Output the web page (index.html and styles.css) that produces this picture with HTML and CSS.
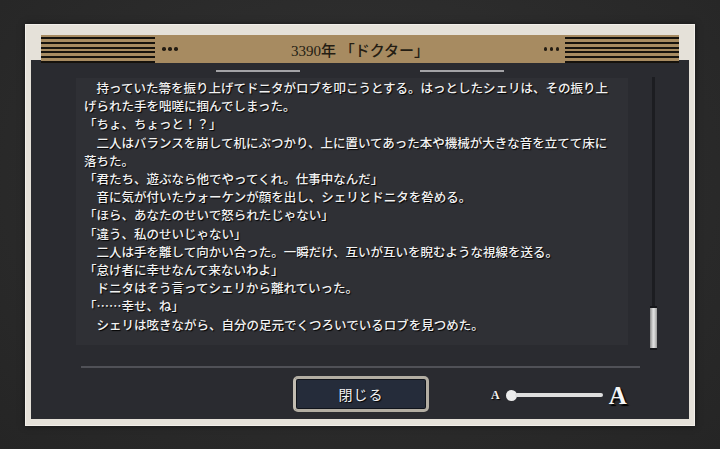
FILE: index.html
```html
<!DOCTYPE html>
<html lang="ja">
<head>
<meta charset="utf-8">
<link rel="stylesheet" href="styles.css">
</head>
<body>
<div class="frame">
  <div class="titlebar">
    <div class="stripes"></div>
    <div class="dots"><i></i><i></i><i></i></div>
    <div class="title">3390年 「ドクター」</div>
    <div class="dots"><i></i><i></i><i></i></div>
    <div class="stripes"></div>
  </div>
  <div class="panel">
    <div class="rule-row"><span></span><span></span></div>
    <div class="body">
      <div class="text">
        <p class="n">持っていた箒を振り上げてドニタがロブを叩こうとする。はっとしたシェリは、その振り上げられた手を咄嗟に掴んでしまった。</p>
        <p>「ちょ、ちょっと！？」</p>
        <p class="n">二人はバランスを崩して机にぶつかり、上に置いてあった本や機械が大きな音を立てて床に落ちた。</p>
        <p>「君たち、遊ぶなら他でやってくれ。仕事中なんだ」</p>
        <p class="n">音に気が付いたウォーケンが顔を出し、シェリとドニタを咎める。</p>
        <p>「ほら、あなたのせいで怒られたじゃない」</p>
        <p>「違う、私のせいじゃない」</p>
        <p class="n">二人は手を離して向かい合った。一瞬だけ、互いが互いを睨むような視線を送る。</p>
        <p>「怠け者に幸せなんて来ないわよ」</p>
        <p class="n">ドニタはそう言ってシェリから離れていった。</p>
        <p>「……幸せ、ね」</p>
        <p class="n">シェリは呟きながら、自分の足元でくつろいでいるロブを見つめた。</p>
      </div>
      <div class="scroll"><div class="track"></div><div class="thumb"></div></div>
    </div>
    <div class="footer-rule"></div>
    <div class="footer">
      <button class="close">閉じる</button>
      <div class="size">
        <span class="a-small">A</span>
        <span class="knob"></span>
        <span class="bar"></span>
        <span class="a-big">A</span>
      </div>
    </div>
  </div>
</div>
</body>
</html>
```
FILE: styles.css
```css
html, body {
  margin: 0;
  padding: 0;
}
body {
  width: 720px;
  height: 449px;
  overflow: hidden;
  background: radial-gradient(ellipse at 50% 40%, #333333 0%, #2b2b2b 55%, #252525 100%);
  font-family: "Noto Sans CJK JP", sans-serif;
}
.frame {
  box-sizing: border-box;
  margin: 24px 0 0 25px;
  width: 670px;
  height: 402px;
  padding: 11px 5px 6px 5px;
  background: #e5e1d9;
  border: 1px solid #f2efea;
  box-shadow: 0 0 6px rgba(0,0,0,0.5);
}
.titlebar {
  position: relative;
  z-index: 1;
  height: 28px;
  margin: -1px 10px 0 10px;
  background: #a78b61;
  display: flex;
  align-items: center;
}
.stripes {
  width: 114px;
  height: 28px;
  background: repeating-linear-gradient(to bottom, transparent 0, transparent 2.4px, #16120c 2.4px, #16120c 4.4px, transparent 4.4px, transparent 4.65px);
}
.dots {
  display: flex;
  gap: 2.5px;
  margin: 0 6px 0 7px;
}
.dots i {
  width: 3.5px;
  height: 3.5px;
  border-radius: 50%;
  background: #231c12;
}
.title {
  flex: 1;
  text-align: center;
  font-family: "Liberation Serif", "Noto Sans CJK JP", serif;
  font-size: 15px;
  font-weight: 500;
  color: #241d13;
  padding-top: 1px;
}
.panel {
  box-sizing: border-box;
  margin-top: -3px;
  height: 359px;
  background: #2a2b30;
  padding-top: 10px;
}
.rule-row {
  display: flex;
  justify-content: center;
  gap: 120px;
}
.rule-row span {
  width: 84px;
  height: 2px;
  background: #a3a3a6;
}
.body {
  display: flex;
  align-items: flex-start;
  margin-top: 6px;
  padding-left: 45px;
}
.text {
  box-sizing: border-box;
  width: 552px;
  height: 267px;
  background: #2f3035;
  padding: 1px 0 0 8px;
  color: #f2f2f2;
  font-size: 12.5px;
  line-height: 18.2px;
  font-weight: 500;
  text-shadow: 1px 1px 1px #000;
}
.text p {
  margin: 0;
  width: 526px;
  line-break: strict;
}
.text p.n {
  text-indent: 1em;
}
.scroll {
  margin-left: 22px;
  margin-top: -1px;
  width: 7px;
  height: 273px;
  display: flex;
  flex-direction: column;
  align-items: center;
}
.track {
  width: 3px;
  flex: 1;
  background: #1c1d21;
}
.thumb {
  box-sizing: border-box;
  width: 7px;
  height: 44px;
  border-top: 2px solid #15161a;
  border-bottom: 2px solid #15161a;
  background: linear-gradient(to right, #8a8a8a 0%, #d6d6d6 40%, #e2e2e2 55%, #9a9a9a 100%);
}
.footer-rule {
  margin: 16px 0 0 50px;
  width: 559px;
  height: 2px;
  background: #505157;
}
.footer {
  display: flex;
  align-items: center;
  margin-top: 8px;
  padding-left: 262px;
}
.close {
  box-sizing: border-box;
  width: 136px;
  height: 36px;
  border: 3px solid #b3aea3;
  border-left-color: #c2bdb2;
  border-radius: 5px;
  background: #252c3a;
  box-shadow: inset 0 0 0 1px #10141b;
  color: #f4f4f4;
  font-family: "Noto Sans CJK JP", sans-serif;
  font-size: 14px;
  letter-spacing: 1px;
  padding: 0;
  text-shadow: 1px 1px 1px #000;
}
.size {
  display: flex;
  align-items: center;
  margin-left: 62px;
  margin-top: 2px;
}
.a-small {
  font-family: "Liberation Serif", serif;
  font-weight: bold;
  font-size: 12px;
  color: #f4f4f4;
  text-shadow: 1px 1px 1px #000;
}
.knob {
  width: 11px;
  height: 11px;
  border-radius: 50%;
  background: #ececec;
  margin-left: 6px;
}
.bar {
  width: 88px;
  height: 4px;
  border-radius: 2px;
  background: #dedede;
  margin-left: -2px;
}
.a-big {
  font-family: "Liberation Serif", serif;
  font-weight: bold;
  font-size: 25px;
  line-height: 1;
  color: #f6f6f6;
  margin-left: 6px;
  text-shadow: 2px 2px 1px #000;
}
```
